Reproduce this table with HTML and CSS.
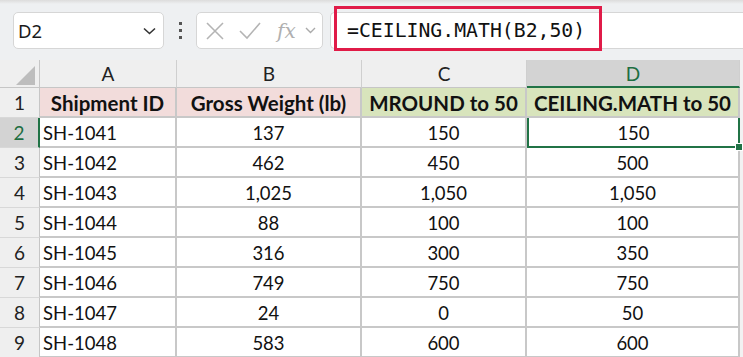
FILE: index.html
```html
<!DOCTYPE html>
<html>
<head>
<meta charset="utf-8">
<link rel="stylesheet" href="styles.css">
</head>
<body>
<div class="toolbar">
  <div class="namebox">
    <span class="name">D2</span>
    <svg class="chev" width="13" height="8" viewBox="0 0 13 8"><polyline points="1,1.5 6.5,6.5 12,1.5" fill="none" stroke="#333" stroke-width="1.6"/></svg>
  </div>
  <div class="dots"><i></i><i></i><i></i></div>
  <div class="fxbox">
    <svg width="18" height="18" viewBox="0 0 18 18"><path d="M1 1 L17 17 M17 1 L1 17" stroke="#b4b4b4" stroke-width="1.6" fill="none"/></svg>
    <svg width="22" height="18" viewBox="0 0 22 18"><polyline points="1,9 8,16 21,1" stroke="#b4b4b4" stroke-width="1.6" fill="none"/></svg>
    <span class="fx">fx</span>
    <svg class="chev2" width="11" height="7" viewBox="0 0 11 7"><polyline points="1,1 5.5,5.5 10,1" fill="none" stroke="#aaa" stroke-width="1.4"/></svg>
  </div>
  <div class="formula">
    <span class="ftext">=CEILING.MATH(B2,50)</span>
    <div class="highlight"></div>
  </div>
</div>
<div class="sheet">
  <div class="corner"><div class="tri"></div></div>
  <div class="colh">A</div>
  <div class="colh">B</div>
  <div class="colh">C</div>
  <div class="colh sel">D</div>
  <div class="edge"></div>

  <div class="rowh">1</div>
  <div class="cell hd pink">Shipment ID</div>
  <div class="cell hd pink">Gross Weight (lb)</div>
  <div class="cell hd green">MROUND to 50</div>
  <div class="cell hd green">CEILING.MATH to 50</div>
  <div class="edge"></div>

  <div class="rowh sel">2</div>
  <div class="cell left">SH-1041</div>
  <div class="cell">137</div>
  <div class="cell">150</div>
  <div class="cell active">150<span class="handle"></span></div>
  <div class="edge"></div>

  <div class="rowh">3</div>
  <div class="cell left">SH-1042</div>
  <div class="cell">462</div>
  <div class="cell">450</div>
  <div class="cell">500</div>
  <div class="edge"></div>

  <div class="rowh">4</div>
  <div class="cell left">SH-1043</div>
  <div class="cell">1,025</div>
  <div class="cell">1,050</div>
  <div class="cell">1,050</div>
  <div class="edge"></div>

  <div class="rowh">5</div>
  <div class="cell left">SH-1044</div>
  <div class="cell">88</div>
  <div class="cell">100</div>
  <div class="cell">100</div>
  <div class="edge"></div>

  <div class="rowh">6</div>
  <div class="cell left">SH-1045</div>
  <div class="cell">316</div>
  <div class="cell">300</div>
  <div class="cell">350</div>
  <div class="edge"></div>

  <div class="rowh">7</div>
  <div class="cell left">SH-1046</div>
  <div class="cell">749</div>
  <div class="cell">750</div>
  <div class="cell">750</div>
  <div class="edge"></div>

  <div class="rowh">8</div>
  <div class="cell left">SH-1047</div>
  <div class="cell">24</div>
  <div class="cell">0</div>
  <div class="cell">50</div>
  <div class="edge"></div>

  <div class="rowh">9</div>
  <div class="cell left">SH-1048</div>
  <div class="cell">583</div>
  <div class="cell">600</div>
  <div class="cell">600</div>
  <div class="edge"></div>
</div>
</body>
</html>
```

FILE: styles.css
```css
html, body {
  margin: 0;
  padding: 0;
}
body {
  width: 743px;
  height: 357px;
  overflow: hidden;
  background: #ffffff;
  font-family: "Lato", "Liberation Sans", sans-serif;
}
.toolbar {
  height: 60px;
  box-sizing: border-box;
  background: linear-gradient(#dcdcdc 0px, #eef0f2 4px, #eef0f2 100%);
  display: flex;
  align-items: flex-start;
  padding: 12px 0 0 13px;
}
.namebox {
  width: 151px;
  height: 37px;
  box-sizing: border-box;
  background: #fff;
  border: 1px solid #d6d6d6;
  border-radius: 5px;
  display: flex;
  align-items: center;
  justify-content: space-between;
  padding: 0 7px 0 4px;
  font-family: "Noto Sans", "Open Sans", sans-serif;
  font-size: 18.5px;
  color: #1a1a1a;
}
.dots {
  width: 32px;
  height: 37px;
  display: flex;
  flex-direction: column;
  align-items: center;
  justify-content: center;
  gap: 4px;
}
.dots i {
  display: block;
  width: 3px;
  height: 3px;
  background: #555;
}
.fxbox {
  width: 127px;
  height: 37px;
  box-sizing: border-box;
  background: #fff;
  border: 1px solid #d6d6d6;
  border-radius: 5px;
  display: flex;
  align-items: center;
  padding: 0 0 0 9px;
  gap: 15px;
}
.fx {
  font-family: "DejaVu Serif", "Liberation Serif", serif;
  font-style: italic;
  font-size: 20px;
  color: #b0b0b0;
  margin-left: 1px;
}
.chev2 {
  margin-left: -6px;
}
.formula {
  position: relative;
  flex: 1;
  height: 37px;
  margin-left: 7px;
  box-sizing: border-box;
  background: #fff;
  border: 1px solid #d6d6d6;
  border-right: none;
  border-radius: 5px 0 0 5px;
  display: flex;
  align-items: center;
  padding-left: 16px;
}
.ftext {
  font-family: "DejaVu Sans Mono", "Liberation Mono", monospace;
  font-size: 19.8px;
  color: #111;
}
.highlight {
  position: absolute;
  left: 3px;
  top: -7px;
  width: 268px;
  height: 45px;
  box-sizing: border-box;
  border: 3px solid #e01b48;
}
.sheet {
  display: grid;
  grid-template-columns: 40px 137px 185px 165px 213px 3px;
  grid-template-rows: 28px repeat(9, 30px);
  font-size: 18.5px;
  color: #111;
}
.corner {
  position: relative;
  background: #efefef;
  border-right: 1px solid #c6c6c6;
  border-bottom: 1px solid #c6c6c6;
}
.tri {
  position: absolute;
  right: 4px;
  bottom: 2px;
  width: 0;
  height: 0;
  border-left: 19px solid transparent;
  border-bottom: 19px solid #bdbdbd;
}
.colh {
  background: #efefef;
  border-right: 1px solid #cfcfcf;
  border-bottom: 1px solid #c6c6c6;
  display: flex;
  align-items: center;
  justify-content: center;
  color: #222;
  font-size: 19px;
}
.colh.sel {
  background: #d3d3d3;
  color: #1e6e42;
  border-bottom: 2px solid #217346;
}
.edge {
  background: #f2f2f2;
}
.rowh {
  background: #efefef;
  border-right: 1px solid #c6c6c6;
  border-bottom: 1px solid #d8d8d8;
  display: flex;
  align-items: center;
  justify-content: center;
  color: #222;
  font-size: 19px;
}
.rowh.sel {
  background: #d3d3d3;
  color: #1e6e42;
  border-right: 2px solid #217346;
}
.cell {
  border-right: 2px solid #c8c8c8;
  border-bottom: 2px solid #c8c8c8;
  display: flex;
  align-items: center;
  justify-content: center;
  white-space: nowrap;
  box-sizing: border-box;
  padding-top: 1px;
}
.cell.left {
  justify-content: flex-start;
  padding-left: 3px;
}
.cell.hd {
  font-weight: 700;
  font-size: 20.5px;
}
.pink {
  background: #f2dcdb;
}
.green {
  background: #d8e4bc;
}
.active {
  position: relative;
  border: 2px solid #217346;
  border-top: none;
}
.handle {
  position: absolute;
  right: -5px;
  bottom: -5px;
  width: 6px;
  height: 6px;
  background: #217346;
  border: 1px solid #fff;
}
```
